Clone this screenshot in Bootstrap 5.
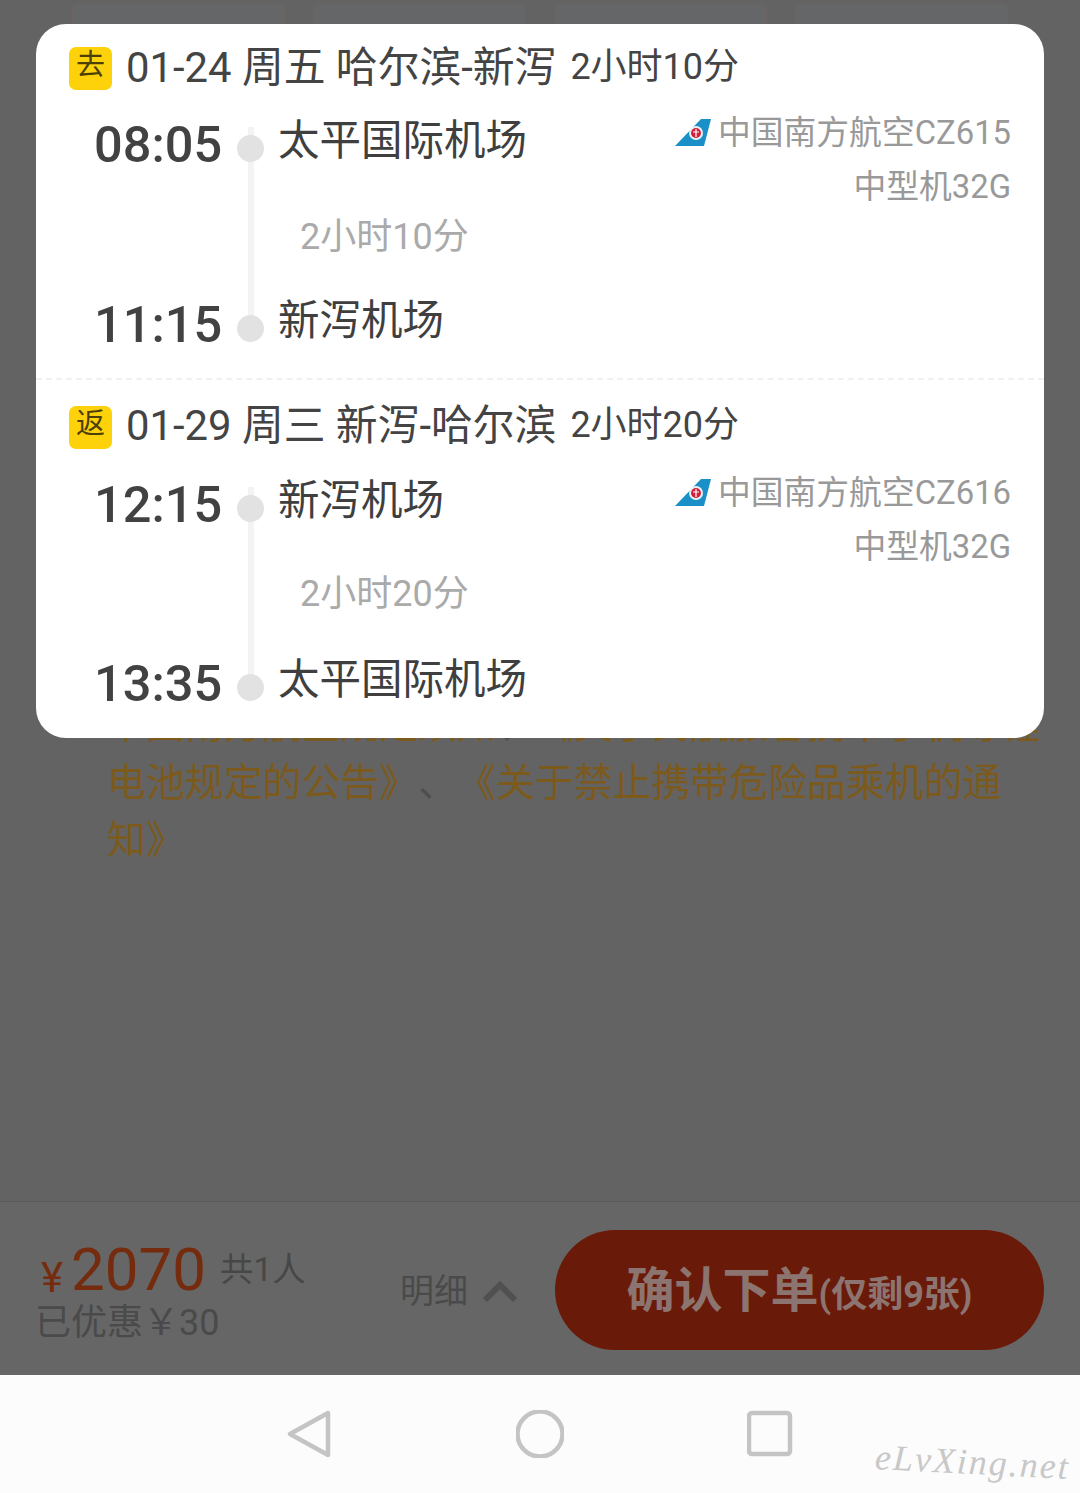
<!DOCTYPE html>
<html lang="zh-CN">
<head>
    <meta charset="UTF-8">
    <meta name="viewport" content="width=device-width, initial-scale=1.0">
    <title>确认下单</title>
    <link href="https://cdn.jsdelivr.net/npm/bootstrap@5.3.0/dist/css/bootstrap.min.css" rel="stylesheet">
    <style>
        html, body { height: 100%; }
        body { font-family: Roboto, "Noto Sans CJK SC", sans-serif; background: #636363; overflow: hidden; }
        .page-wrap { height: 1493px; }

        /* dimmed page behind the sheet */
        .behind { background: #636363; }
        .ghost-row { padding: 3px 72px 0; }
        .ghost-card { width: 213px; height: 100px; border: 1px solid #6b6360; border-radius: 4px; background: #646668; }
        .terms { margin: 593px 30px 0 107px; font-size: 38.9px; line-height: 57.5px; color: #7c5a1c; text-spacing-trim: space-all; }
        .terms-sep { color: #4f4f4f; }

        /* flight sheet */
        .sheet { left: 36px; top: 24px; width: 1008px; height: 714px; background: #fff; border-radius: 30px; color: #444; }
        .leg-go { height: 356px; }
        .leg-dashed { border-bottom: 2px dashed #f0f0f0; }
        .leg-head { padding: 22px 0 0 33px; height: 67px; }
        .leg-back .leg-head { padding-top: 23px; height: 71px; }
        .leg-back .leg-span { padding-top: 48px; }
        .tag-box { width: 43px; height: 43px; background: #fdd20a; border-radius: 7px; color: #4c3f08; font-size: 29px; line-height: 37px; text-align: center; }
        .leg-date { margin: 0 0 2px 14px; font-size: 41.8px; line-height: 43px; white-space: pre; }
        .leg-time { margin: 0 0 2px 14px; font-size: 36px; line-height: 43px; }
        .leg-back .leg-date, .leg-back .leg-time { margin-bottom: 3px; }
        .leg-body { padding: 15px 33px 0 59px; }
        .leg-body::before { content: ""; position: absolute; left: 212px; top: 36px; bottom: 26px; width: 6px; background: #f3f3f3; }
        .stop { height: 56px; }
        .stop-time { margin: 11px 0 0 -1px; flex: 0 0 143px; font-size: 50.5px; font-weight: 500; line-height: 56px; color: #424242; }
        .stop-dot { width: 27px; height: 27px; margin-top: 29px; background: #e2e2e2; border-radius: 50%; position: relative; }
        .stop-name { margin: 9px 0 0 14px; font-size: 41.5px; line-height: 52px; color: #3f3f3f; }
        .flight-info { font-size: 32.8px; line-height: 54px; color: #999; text-align: right; }
        .tail-logo { width: 36px; height: 27px; margin-right: 7px; vertical-align: -2px; }
        .leg-span { height: 123px; padding: 51px 0 0 205px; font-size: 36px; line-height: 48px; color: #aaa; }
        .leg-go .leg-span { height: 124px; }

        /* bottom bar */
        .order-bar { height: 174px; background: #666; border-top: 1px solid #5a5a5a; padding: 0 36px 0 37px; }
        .price-col { width: 363px; }
        .price-top { color: #752c0e; line-height: 70px; height: 70px; }
        .price-yen { font-size: 42px; margin-left: 4px; position: relative; top: 2px; }
        .price-num { font-size: 60px; margin-left: 8px; }
        .price-count { font-size: 33.5px; color: #474747; margin-left: 14px; position: relative; top: -9px; }
        .price-off { font-size: 36px; line-height: 38px; color: #4a4a4a; margin: -1px 0 0 -2px; }
        .detail-btn { width: 155px; padding-top: 6px; font-size: 34px; color: #4a4a4a; }
        .chev-mark { margin-left: 14px; }
        .confirm-btn { width: 489px; height: 120px; margin-top: 2px; padding: 2px 0 0; background: #6a1a08; border-radius: 60px; color: #8c7470; font-weight: 700; font-size: 48px; border: 0; }
        .confirm-btn span { font-size: 36px; }

        /* android nav */
        .sys-nav { height: 118px; background: #fcfcfc; gap: 183px; }
        .sys-nav svg { width: 48px; height: 48px; }
        .wm-text { right: 10px; bottom: 11px; font-family: "Liberation Serif", serif; font-style: italic; font-size: 36px; letter-spacing: 2px; color: #c8c8c8; line-height: 40px; transform: rotate(3deg); }
    </style>
</head>
<body>

<div class="page-wrap d-flex flex-column position-relative">

    <div class="behind flex-grow-1">
        <div class="ghost-row d-flex justify-content-between">
            <div class="ghost-card"></div>
            <div class="ghost-card"></div>
            <div class="ghost-card"></div>
            <div class="ghost-card"></div>
        </div>
        <div class="terms">中国南方航空规定须知<span class="terms-sep">、</span>《关于民航旅客携带手机等锂电池规定的公告》<span class="terms-sep">、</span>《关于禁止携带危险品乘机的通知》</div>
    </div>

    <div class="order-bar d-flex align-items-center">
        <div class="price-col">
            <div class="price-top"><span class="price-yen">¥</span><span class="price-num">2070</span><span class="price-count">共1人</span></div>
            <div class="price-off">已优惠￥30</div>
        </div>
        <div class="detail-btn d-flex align-items-center">
            <span>明细</span>
            <svg class="chev-mark" width="36" height="24" viewBox="0 0 36 24"><path d="M3 20 18 5l15 15" fill="none" stroke="#505050" stroke-width="6"/></svg>
        </div>
        <button class="confirm-btn" type="button">确认下单<span>(仅剩9张)</span></button>
    </div>

    <div class="sys-nav d-flex align-items-center justify-content-center">
        <svg viewBox="0 0 48 48"><path d="M43 3 5 24l38 21z" fill="none" stroke="#c4c4c4" stroke-width="4.500" stroke-linejoin="round"/></svg>
        <svg viewBox="0 0 48 48"><circle cx="24" cy="24" r="22.500" fill="none" stroke="#c4c4c4" stroke-width="4.500"/></svg>
        <svg viewBox="0 0 48 48"><rect x="2" y="3" width="41" height="41" rx="3" fill="none" stroke="#c4c4c4" stroke-width="4.500"/></svg>
        <div class="wm-text position-absolute">eLvXing.net</div>
    </div>

    <!-- popup with the two flights -->
    <div class="sheet position-absolute">
        <div class="leg-go leg-dashed">
            <div class="leg-head d-flex align-items-center">
                <div class="tag-box">去</div>
                <div class="leg-date">01-24 周五 哈尔滨-新泻</div>
                <div class="leg-time">2小时10分</div>
            </div>
            <div class="leg-body position-relative">
                <div class="stop d-flex">
                    <div class="stop-time">08:05</div>
                    <div class="stop-dot"></div>
                    <div class="stop-name">太平国际机场</div>
                    <div class="flight-info ms-auto">
                        <svg class="tail-logo" viewBox="0 0 36 27"><path d="M36 0H26L0 27h29z" fill="#1a8fc8"/><circle cx="21" cy="14" r="7" fill="#e8f2f6"/><circle cx="21" cy="14" r="5" fill="#d0203a"/><path d="M21 10v8M18 13h6" stroke="#fff" stroke-width="1.200"/></svg>中国南方航空CZ615<br>中型机32G
                    </div>
                </div>
                <div class="leg-span">2小时10分</div>
                <div class="stop d-flex">
                    <div class="stop-time">11:15</div>
                    <div class="stop-dot"></div>
                    <div class="stop-name">新泻机场</div>
                </div>
            </div>
        </div>
        <div class="leg-back">
            <div class="leg-head d-flex align-items-center">
                <div class="tag-box">返</div>
                <div class="leg-date">01-29 周三 新泻-哈尔滨</div>
                <div class="leg-time">2小时20分</div>
            </div>
            <div class="leg-body position-relative">
                <div class="stop d-flex">
                    <div class="stop-time">12:15</div>
                    <div class="stop-dot"></div>
                    <div class="stop-name">新泻机场</div>
                    <div class="flight-info ms-auto">
                        <svg class="tail-logo" viewBox="0 0 36 27"><path d="M36 0H26L0 27h29z" fill="#1a8fc8"/><circle cx="21" cy="14" r="7" fill="#e8f2f6"/><circle cx="21" cy="14" r="5" fill="#d0203a"/><path d="M21 10v8M18 13h6" stroke="#fff" stroke-width="1.200"/></svg>中国南方航空CZ616<br>中型机32G
                    </div>
                </div>
                <div class="leg-span">2小时20分</div>
                <div class="stop d-flex">
                    <div class="stop-time">13:35</div>
                    <div class="stop-dot"></div>
                    <div class="stop-name">太平国际机场</div>
                </div>
            </div>
        </div>
    </div>

</div>

<script src="https://cdn.jsdelivr.net/npm/bootstrap@5.3.0/dist/js/bootstrap.bundle.min.js"></script>
</body>
</html>
